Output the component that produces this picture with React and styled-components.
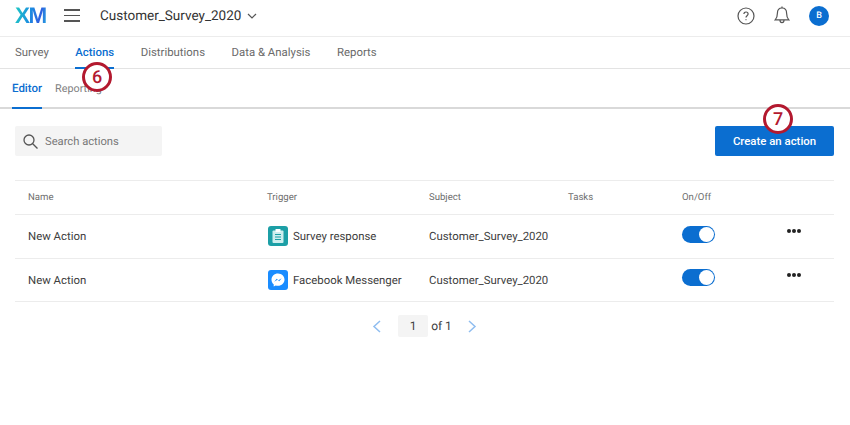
import React from "react";
import styled, { createGlobalStyle } from "styled-components";

const GlobalStyle = createGlobalStyle`
  html, body {
    margin: 0;
    padding: 0;
    background: #fff;
  }
  body {
    font-family: Roboto, "Liberation Sans", sans-serif;
    color: #404040;
    text-rendering: geometricPrecision;
  }
`;

const Page = styled.div`
  position: relative;
  width: 850px;
  height: 425px;
  overflow: hidden;
`;

const Header = styled.header`
  display: flex;
  align-items: center;
  height: 37px;
  box-sizing: border-box;
  padding: 0 21px 5px 15px;
  border-bottom: 1px solid #ececec;
`;

const Logo = styled.div`
  width: 32px;
  margin-right: -2px;
  font-family: "Liberation Sans", sans-serif;
  font-size: 22.5px;
  font-weight: 700;
  letter-spacing: -1.5px;
  line-height: 30px;
  background: linear-gradient(100deg, #1fd0c0 0%, #1a8fe0 45%, #2f5fe0 75%, #20b8e0 100%);
  -webkit-background-clip: text;
  background-clip: text;
  color: transparent;
`;

const MenuButton = styled.div`
  display: flex;
  flex-direction: column;
  gap: 4px;
  width: 16px;
  margin-left: 19px;
  span {
    height: 1.5px;
    background: #555;
  }
`;

const SurveyName = styled.div`
  display: flex;
  align-items: center;
  gap: 6px;
  margin-left: 20px;
  font-size: 13.5px;
  color: #333;
`;

const HeaderIcons = styled.div`
  display: flex;
  align-items: center;
  gap: 19px;
  margin-left: auto;
`;

const Avatar = styled.div`
  width: 20px;
  height: 20px;
  border-radius: 50%;
  background: #0b6ed0;
  color: #fff;
  font-size: 9px;
  font-weight: 500;
  display: flex;
  align-items: center;
  justify-content: center;
`;

const MainTabs = styled.nav`
  display: flex;
  gap: 26.5px;
  height: 32px;
  box-sizing: border-box;
  padding-left: 15px;
  border-bottom: 1px solid #e3e3e3;
`;

const MainTab = styled.div`
  display: flex;
  align-items: center;
  height: 32px;
  box-sizing: border-box;
  font-size: 11.4px;
  font-weight: ${(p) => (p.$active ? 500 : 400)};
  color: ${(p) => (p.$active ? "#0b6ed0" : "#6b6b6b")};
  border-bottom: 2px solid ${(p) => (p.$active ? "#0b6ed0" : "transparent")};
`;

const SubTabs = styled.nav`
  display: flex;
  gap: 13px;
  height: 40px;
  box-sizing: border-box;
  padding-left: 12px;
  border-bottom: 2px solid #d9d9d9;
`;

const SubTab = styled.div`
  display: flex;
  align-items: center;
  height: 40px;
  box-sizing: border-box;
  font-size: ${(p) => (p.$active ? "11.5px" : "10.8px")};
  font-weight: ${(p) => (p.$active ? 500 : 400)};
  color: ${(p) => (p.$active ? "#0b6ed0" : "#808080")};
  border-bottom: 2px solid ${(p) => (p.$active ? "#0b6ed0" : "transparent")};
`;

const Toolbar = styled.div`
  display: flex;
  justify-content: space-between;
  align-items: center;
  padding: 17px 16px 0 15px;
`;

const SearchBox = styled.div`
  display: flex;
  align-items: center;
  gap: 7px;
  width: 147px;
  height: 30px;
  padding-left: 8px;
  box-sizing: border-box;
  background: #f4f4f4;
  border-radius: 2px;
  font-size: 11.2px;
  color: #777;
`;

const CreateButton = styled.button`
  width: 119px;
  height: 30px;
  border: none;
  border-radius: 2px;
  background: #0b6ed0;
  color: #fff;
  font-family: inherit;
  font-size: 11.4px;
  font-weight: 500;
  padding: 0;
`;

const Table = styled.div`
  margin: 24px 16px 0 15px;
  border-top: 1px solid #ececec;
`;

const Row = styled.div`
  display: grid;
  grid-template-columns: 252px 162px 139px 114px 105px 1fr;
  align-items: center;
  height: ${(p) => (p.$head ? "33px" : "42.5px")};
  border-bottom: 1px solid #ececec;
  font-size: ${(p) => (p.$head ? "9.6px" : "11.4px")};
  color: ${(p) => (p.$head ? "#6e6e6e" : "#404040")};
  > :first-child {
    padding-left: 13px;
  }
`;

const Trigger = styled.div`
  display: flex;
  align-items: center;
  gap: 5px;
  margin-left: 1px;
`;

const TriggerIcon = styled.div`
  width: 20px;
  height: 20px;
  border-radius: 3px;
  background: ${(p) => p.$bg};
  display: flex;
  align-items: center;
  justify-content: center;
`;

const Toggle = styled.div`
  position: relative;
  width: 33px;
  height: 17px;
  margin-top: -4px;
  border-radius: 9px;
  background: #0b6ed0;
  box-sizing: border-box;
  &::after {
    content: "";
    position: absolute;
    top: 1px;
    right: 1px;
    width: 15px;
    height: 15px;
    border-radius: 50%;
    background: #fff;
  }
`;

const MoreDots = styled.div`
  display: flex;
  gap: 1px;
  margin-top: -10px;
  span {
    width: 4px;
    height: 4px;
    border-radius: 50%;
    background: #222;
  }
`;

const Pagination = styled.div`
  display: flex;
  align-items: center;
  justify-content: center;
  gap: 3px;
  margin-top: 13px;
  padding-right: 1px;
  font-size: 12px;
  color: #404040;
`;

const PageBox = styled.div`
  display: flex;
  align-items: center;
  justify-content: center;
  width: 30px;
  height: 22px;
  margin-left: 14px;
  background: #f4f4f4;
  border-radius: 2px;
`;

const PageOf = styled.span`
  margin-right: 13px;
`;

const Callout = styled.div`
  position: absolute;
  left: ${(p) => p.$x}px;
  top: ${(p) => p.$y}px;
  width: 24px;
  height: 24px;
  border: 3px solid #b3192f;
  border-radius: 50%;
  background: #fff;
  color: #b3192f;
  font-size: 18px;
  font-weight: 500;
  display: flex;
  align-items: center;
  justify-content: center;
`;

const ChevronDown = () => (
  <svg width="10" height="6" viewBox="0 0 10 6" fill="none" stroke="#555" strokeWidth="1.2">
    <path d="M1 1l4 4 4-4" />
  </svg>
);

const HelpIcon = () => (
  <svg width="18" height="18" viewBox="0 0 18 18" fill="none" stroke="#555" strokeWidth="1.2">
    <circle cx="9" cy="9" r="8" />
    <path d="M6.900 7.100c0-1.300 1-2.100 2.100-2.100s2.100.8 2.100 2c0 1.700-2.100 1.700-2.100 3.400" />
    <circle cx="9" cy="12.700" r=".6" fill="#555" stroke="none" />
  </svg>
);

const BellIcon = () => (
  <svg width="16" height="19" viewBox="0 0 16 19" fill="none" stroke="#555" strokeWidth="1.2">
    <path d="M8 2c3 0 4.600 2.200 4.600 5.200 0 3 .5 4.800 2.200 6.600H1.200C2.900 12 3.400 10.200 3.400 7.200 3.400 4.200 5 2 8 2z" />
    <path d="M8 .6V2M6 14c0 1.500.8 2.600 2 2.600s2-1.100 2-2.600" />
  </svg>
);

const SearchIcon = () => (
  <svg width="15" height="15" viewBox="0 0 15 15" fill="none" stroke="#555" strokeWidth="1.3">
    <circle cx="6" cy="6" r="5" />
    <path d="M9.700 9.700L14.500 14.500" />
  </svg>
);

const ClipboardIcon = () => (
  <svg width="12" height="14" viewBox="0 0 12 14" fill="none">
    <rect x=".5" y="1.500" width="11" height="12.500" rx="1" fill="#cdeeee" />
    <rect x="3.500" y="0" width="5" height="3" rx=".5" fill="#fff" />
    <path d="M3 5.500h6M3 8h6M3 10.500h6" stroke="#1c9fa6" strokeWidth="1" />
  </svg>
);

const MessengerIcon = () => (
  <svg width="14" height="14" viewBox="0 0 14 14">
    <path d="M7 .5C3.300.5.500 3.200.500 6.700c0 1.900.8 3.500 2.200 4.600v2.200l2-1.100c.7.200 1.500.3 2.300.3 3.700 0 6.500-2.700 6.500-6S10.700.5 7 .5z" fill="#fff" />
    <path d="M3.200 8.700l2.500-3 1.700 1.500 3.300-2-2.500 3-1.700-1.500z" fill="#1a8cff" />
  </svg>
);

const PageChevron = ({ left }) => (
  <svg width="9" height="13" viewBox="0 0 9 13" fill="none" stroke="#8fbdf0" strokeWidth="1.500">
    <path d={left ? "M8 1L2 6.500 8 12" : "M1 1l6 5.500L1 12"} />
  </svg>
);

const rows = [
  { name: "New Action", trigger: "Survey response", bg: "#1c9fa6", icon: <ClipboardIcon /> },
  { name: "New Action", trigger: "Facebook Messenger", bg: "#1a8cff", icon: <MessengerIcon /> },
];

export default function App() {
  return (
    <Page>
      <GlobalStyle />
      <Header>
        <Logo>XM</Logo>
        <MenuButton>
          <span />
          <span />
          <span />
        </MenuButton>
        <SurveyName>
          Customer_Survey_2020
          <ChevronDown />
        </SurveyName>
        <HeaderIcons>
          <HelpIcon />
          <BellIcon />
          <Avatar>B</Avatar>
        </HeaderIcons>
      </Header>
      <MainTabs>
        <MainTab>Survey</MainTab>
        <MainTab $active>Actions</MainTab>
        <MainTab>Distributions</MainTab>
        <MainTab>Data &amp; Analysis</MainTab>
        <MainTab>Reports</MainTab>
      </MainTabs>
      <SubTabs>
        <SubTab $active>Editor</SubTab>
        <SubTab>Reporting</SubTab>
      </SubTabs>
      <Toolbar>
        <SearchBox>
          <SearchIcon />
          Search actions
        </SearchBox>
        <CreateButton>Create an action</CreateButton>
      </Toolbar>
      <Table>
        <Row $head>
          <div>Name</div>
          <div>Trigger</div>
          <div>Subject</div>
          <div>Tasks</div>
          <div>On/Off</div>
          <div />
        </Row>
        {rows.map((row) => (
          <Row key={row.trigger}>
            <div>{row.name}</div>
            <Trigger>
              <TriggerIcon $bg={row.bg}>{row.icon}</TriggerIcon>
              {row.trigger}
            </Trigger>
            <div>Customer_Survey_2020</div>
            <div />
            <Toggle />
            <MoreDots>
              <span />
              <span />
              <span />
            </MoreDots>
          </Row>
        ))}
      </Table>
      <Pagination>
        <PageChevron left />
        <PageBox>1</PageBox>
        <PageOf>of 1</PageOf>
        <PageChevron />
      </Pagination>
      <Callout $x={82} $y={62}>6</Callout>
      <Callout $x={763} $y={104}>7</Callout>
    </Page>
  );
}
